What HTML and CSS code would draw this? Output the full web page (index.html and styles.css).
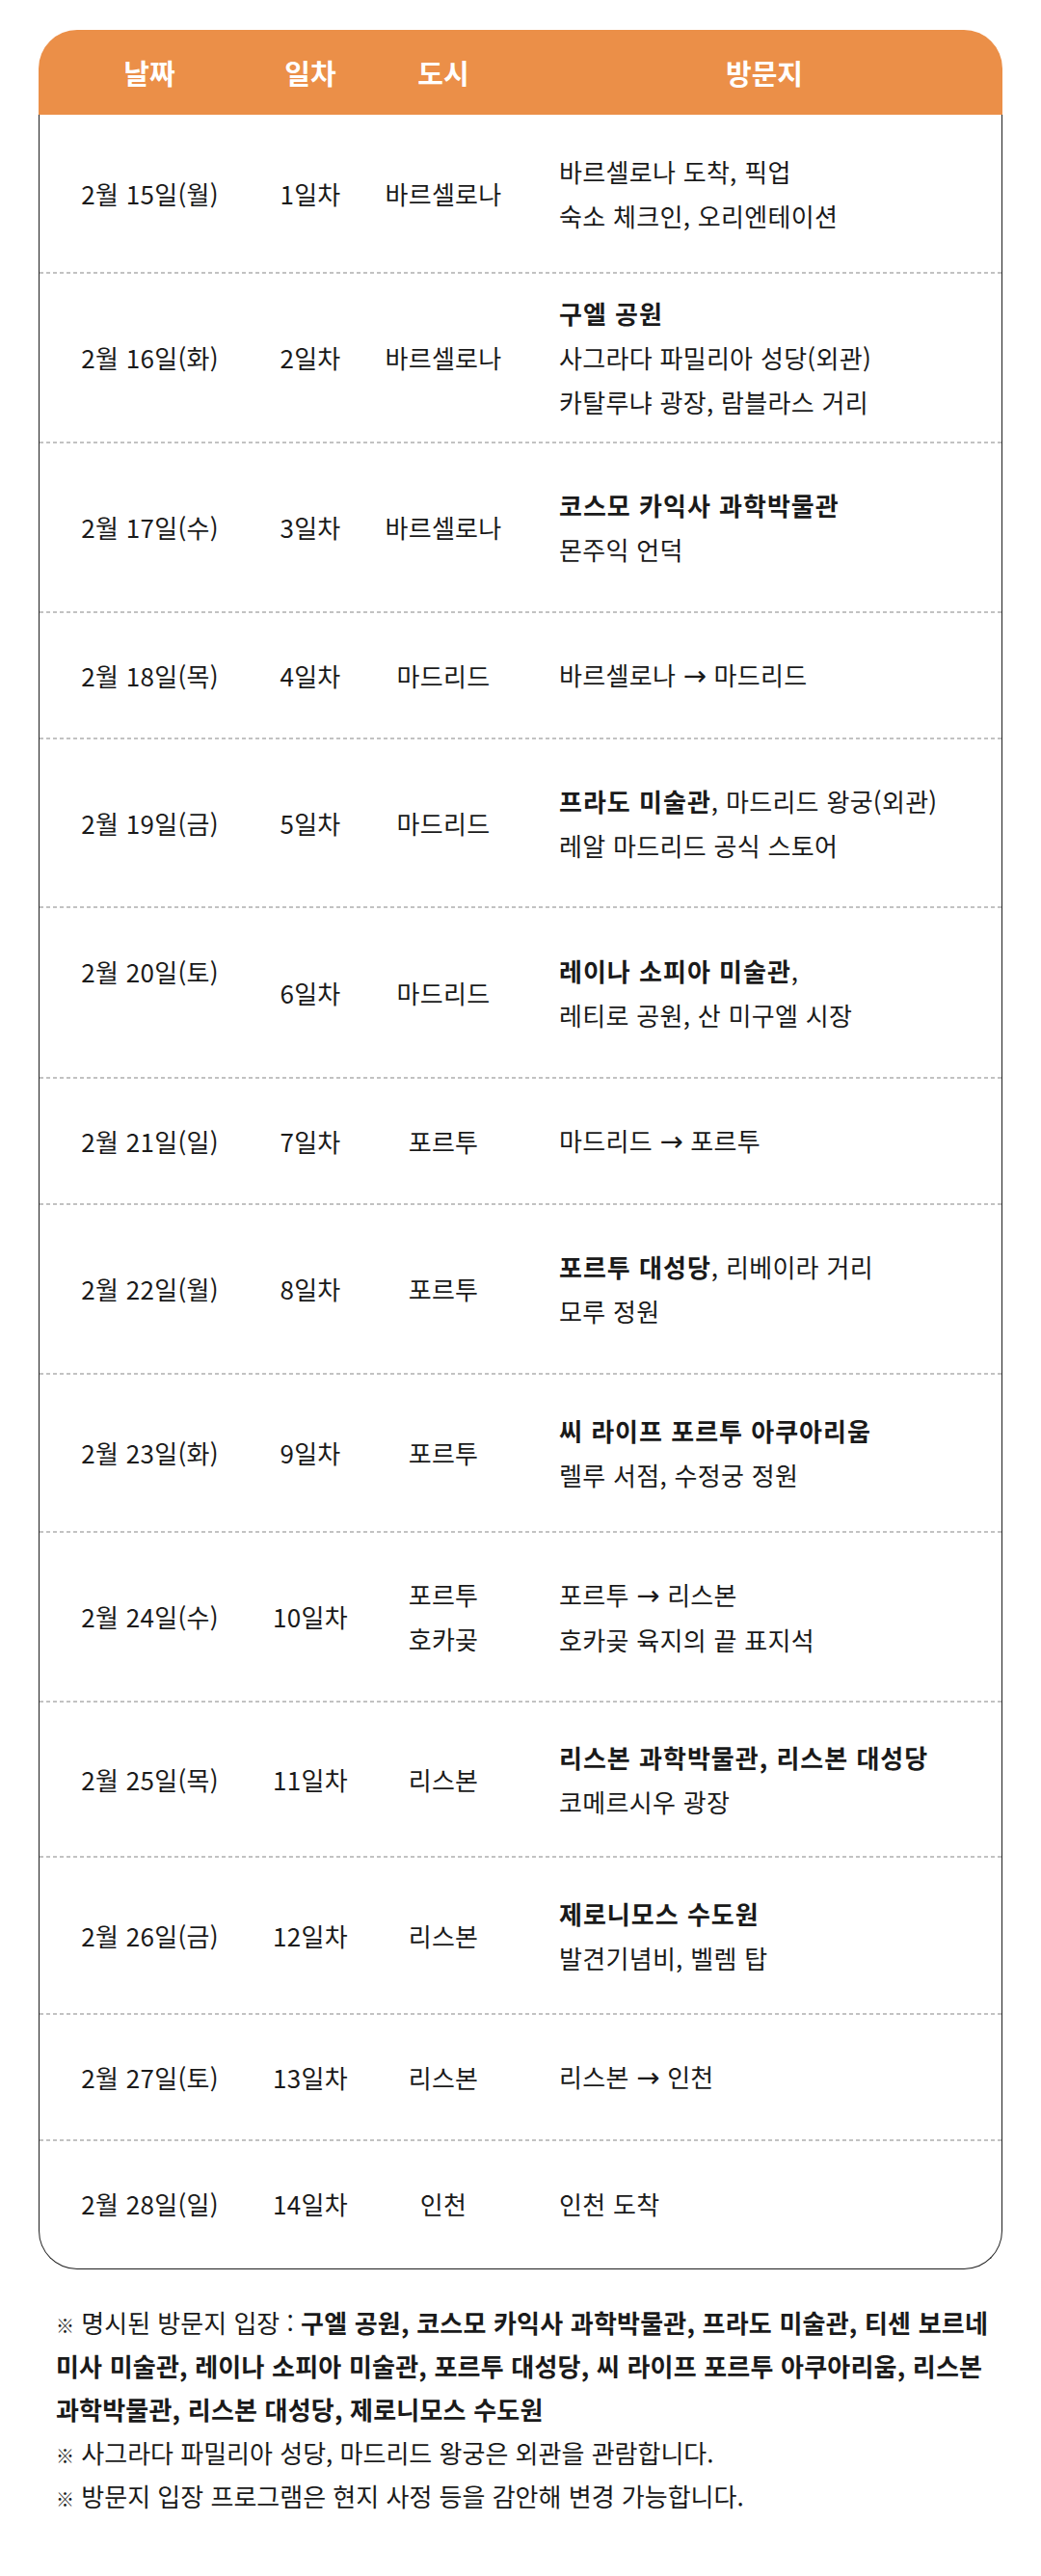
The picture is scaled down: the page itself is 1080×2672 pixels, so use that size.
FILE: index.html
```html
<!DOCTYPE html>
<html lang="ko">
<head>
<meta charset="utf-8">
<title>일정표</title>
<link rel="stylesheet" href="styles.css">
</head>
<body>
<main class="page">
  <section class="schedule">
    <div class="schedule__head">
      <div class="hcell">날짜</div>
      <div class="hcell">일차</div>
      <div class="hcell">도시</div>
      <div class="hcell">방문지</div>
    </div>
    <div class="schedule__body">
      <div class="row h165">
        <div class="cell">2월 15일(월)</div>
        <div class="cell">1일차</div>
        <div class="cell">바르셀로나</div>
        <div class="cell cell--visit">바르셀로나 도착, 픽업<br>숙소 체크인, 오리엔테이션</div>
      </div>
      <div class="row h176">
        <div class="cell">2월 16일(화)</div>
        <div class="cell">2일차</div>
        <div class="cell">바르셀로나</div>
        <div class="cell cell--visit"><b>구엘 공원</b><br>사그라다 파밀리아 성당(외관)<br>카탈루냐 광장, 람블라스 거리</div>
      </div>
      <div class="row h176">
        <div class="cell">2월 17일(수)</div>
        <div class="cell">3일차</div>
        <div class="cell">바르셀로나</div>
        <div class="cell cell--visit"><b>코스모 카익사 과학박물관</b><br>몬주익 언덕</div>
      </div>
      <div class="row h131">
        <div class="cell">2월 18일(목)</div>
        <div class="cell">4일차</div>
        <div class="cell">마드리드</div>
        <div class="cell cell--visit">바르셀로나 <span class="arrow">→</span> 마드리드</div>
      </div>
      <div class="row h175">
        <div class="cell">2월 19일(금)</div>
        <div class="cell">5일차</div>
        <div class="cell">마드리드</div>
        <div class="cell cell--visit"><b>프라도 미술관</b>, 마드리드 왕궁(외관)<br>레알 마드리드 공식 스토어</div>
      </div>
      <div class="row h177">
        <div class="cell cell--raised">2월 20일(토)</div>
        <div class="cell">6일차</div>
        <div class="cell">마드리드</div>
        <div class="cell cell--visit"><b>레이나 소피아 미술관</b>,<br>레티로 공원, 산 미구엘 시장</div>
      </div>
      <div class="row h131">
        <div class="cell">2월 21일(일)</div>
        <div class="cell">7일차</div>
        <div class="cell">포르투</div>
        <div class="cell cell--visit">마드리드 <span class="arrow">→</span> 포르투</div>
      </div>
      <div class="row h176">
        <div class="cell">2월 22일(월)</div>
        <div class="cell">8일차</div>
        <div class="cell">포르투</div>
        <div class="cell cell--visit"><b>포르투 대성당</b>, 리베이라 거리<br>모루 정원</div>
      </div>
      <div class="row h164">
        <div class="cell">2월 23일(화)</div>
        <div class="cell">9일차</div>
        <div class="cell">포르투</div>
        <div class="cell cell--visit"><b>씨 라이프 포르투 아쿠아리움</b><br>렐루 서점, 수정궁 정원</div>
      </div>
      <div class="row h176">
        <div class="cell">2월 24일(수)</div>
        <div class="cell">10일차</div>
        <div class="cell">포르투<br>호카곶</div>
        <div class="cell cell--visit">포르투 <span class="arrow">→</span> 리스본<br>호카곶 육지의 끝 표지석</div>
      </div>
      <div class="row h161">
        <div class="cell">2월 25일(목)</div>
        <div class="cell">11일차</div>
        <div class="cell">리스본</div>
        <div class="cell cell--visit"><b>리스본 과학박물관, 리스본 대성당</b><br>코메르시우 광장</div>
      </div>
      <div class="row h163">
        <div class="cell">2월 26일(금)</div>
        <div class="cell">12일차</div>
        <div class="cell">리스본</div>
        <div class="cell cell--visit"><b>제로니모스 수도원</b><br>발견기념비, 벨렘 탑</div>
      </div>
      <div class="row h131">
        <div class="cell">2월 27일(토)</div>
        <div class="cell">13일차</div>
        <div class="cell">리스본</div>
        <div class="cell cell--visit">리스본 <span class="arrow">→</span> 인천</div>
      </div>
      <div class="row h132 row--last">
        <div class="cell">2월 28일(일)</div>
        <div class="cell">14일차</div>
        <div class="cell">인천</div>
        <div class="cell cell--visit">인천 도착</div>
      </div>
    </div>
  </section>

  <section class="notes">
    <p class="note"><span class="mark">※</span> 명시된 방문지 입장 : <b>구엘 공원, 코스모 카익사 과학박물관, 프라도 미술관, 티센 보르네미사 미술관, 레이나 소피아 미술관, 포르투 대성당, 씨 라이프 포르투 아쿠아리움, 리스본 과학박물관, 리스본 대성당, 제로니모스 수도원</b></p>
    <p class="note"><span class="mark">※</span> 사그라다 파밀리아 성당, 마드리드 왕궁은 외관을 관람합니다.</p>
    <p class="note"><span class="mark">※</span> 방문지 입장 프로그램은 현지 사정 등을 감안해 변경 가능합니다.</p>
  </section>
</main>
</body>
</html>
```

FILE: styles.css
```css
* { box-sizing: border-box; }

html, body {
  margin: 0;
  padding: 0;
  background: #ffffff;
}

body {
  font-family: "Noto Sans CJK KR", "Noto Sans", sans-serif;
  color: #1a1a1a;
  width: 1080px;
}

.page {
  padding: 31px 40px 0 40px;
}

.schedule {
  width: 1000px;
}

.schedule__head {
  display: grid;
  grid-template-columns: 230px 104px 172px 1fr;
  height: 88px;
  background: #eb8f48;
  border-radius: 40px 40px 0 0;
  align-items: center;
}

.hcell {
  text-align: center;
  color: #ffffff;
  font-weight: 700;
  font-size: 29px;
  line-height: 40px;
}

.schedule__body {
  border: 1px solid #1f1f1f;
  border-top: none;
  border-radius: 0 0 40px 40px;
}

.row {
  display: grid;
  grid-template-columns: 229px 104px 172px 1fr;
  align-items: center;
  background-image: linear-gradient(to right, #c2c2c2 0 4px, transparent 4px 7px);
  background-size: 7px 2px;
  background-repeat: repeat-x;
  background-position: left bottom;
  padding-bottom: 2px;
}

.row--last {
  background-image: none;
}

.h131 { min-height: 131px; }
.h132 { min-height: 132px; }
.h161 { min-height: 161px; }
.h163 { min-height: 163px; }
.h164 { min-height: 164px; }
.h165 { min-height: 165px; }
.h175 { min-height: 175px; }
.h176 { min-height: 176px; }
.h177 { min-height: 177px; }

.cell {
  text-align: center;
  font-size: 26px;
  line-height: 46px;
  letter-spacing: 0.3px;
  white-space: nowrap;
}

.cell--raised {
  padding-bottom: 44px;
}

.cell--visit {
  text-align: left;
  padding-left: 34px;
}

.cell b {
  font-weight: 700;
  letter-spacing: 1px;
}

.arrow {
  font-family: "DejaVu Sans", sans-serif;
  font-size: 29px;
  letter-spacing: 0;
}

.notes {
  width: 988px;
  margin-top: 32px;
  padding-left: 18px;
}

.note {
  margin: 0;
  font-size: 26px;
  line-height: 45px;
}

.mark {
  font-size: 19px;
  line-height: 1;
}

.note b {
  font-weight: 700;
  letter-spacing: 0.2px;
}
```
